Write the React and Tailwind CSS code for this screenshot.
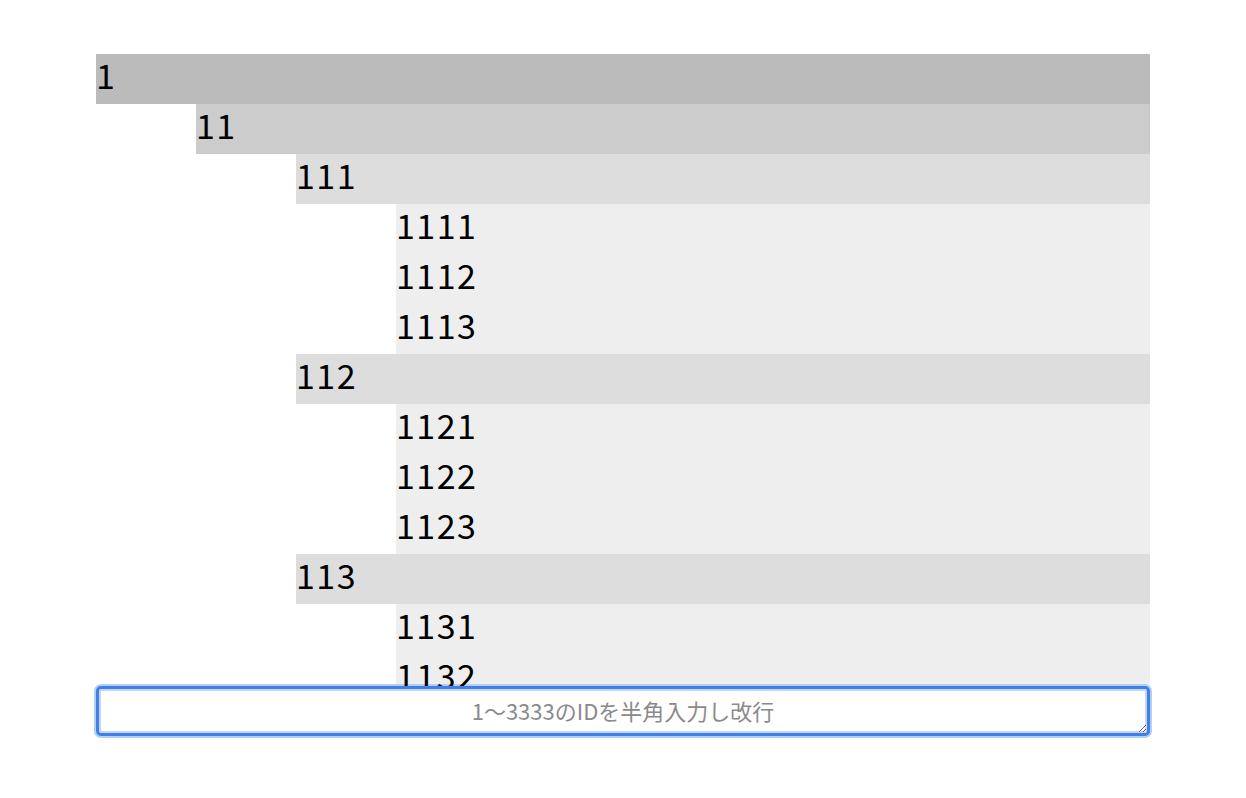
import React, { useState } from 'react';

const levelBg = ['bg-[#bbbbbb]', 'bg-[#cccccc]', 'bg-[#dddddd]', 'bg-[#eeeeee]'];

// builds ids 1..3333: every node has children id+1..id+3 down to 4 digits
const buildTree = (prefix, depth) => {
  if (depth > 4) return [];
  return [1, 2, 3].map((n) => {
    const id = prefix + String(n);
    return { id, children: buildTree(id, depth + 1) };
  });
};

const tree = buildTree('', 1);

const Node = ({ node, depth }) => (
  <div>
    <div className={`h-[50px] leading-[42px] text-[34px] tracking-[1.5px] text-black whitespace-nowrap ${levelBg[depth]}`}>
      {node.id}
    </div>
    {node.children.length > 0 && (
      <div className="ml-[100px]">
        {node.children.map((child) => (
          <Node key={child.id} node={child} depth={depth + 1} />
        ))}
      </div>
    )}
  </div>
);

export default function App() {
  const [value, setValue] = useState('');

  return (
    <div
      className="min-h-screen bg-white pt-[54px] px-[96px]"
      style={{ fontFamily: '"Noto Sans CJK JP", "Noto Sans", sans-serif' }}
    >
      <div className="h-[632px] overflow-hidden">
        {tree.map((node) => (
          <Node key={node.id} node={node} depth={0} />
        ))}
      </div>
      <textarea
        value={value}
        onChange={(e) => setValue(e.target.value)}
        placeholder="1〜3333のIDを半角入力し改行"
        className="block w-full h-[50px] pt-[7px] pb-[9px] px-2 text-center text-[22px] leading-[28px] text-black placeholder:text-[#8a8a8a] bg-white border-[3px] border-[#3f7fe6] rounded-[5px] shadow-[0_0_0_2px_#b3cff7,inset_0_0_0_2px_#c2d7f8] outline-none resize-y"
      />
    </div>
  );
}
